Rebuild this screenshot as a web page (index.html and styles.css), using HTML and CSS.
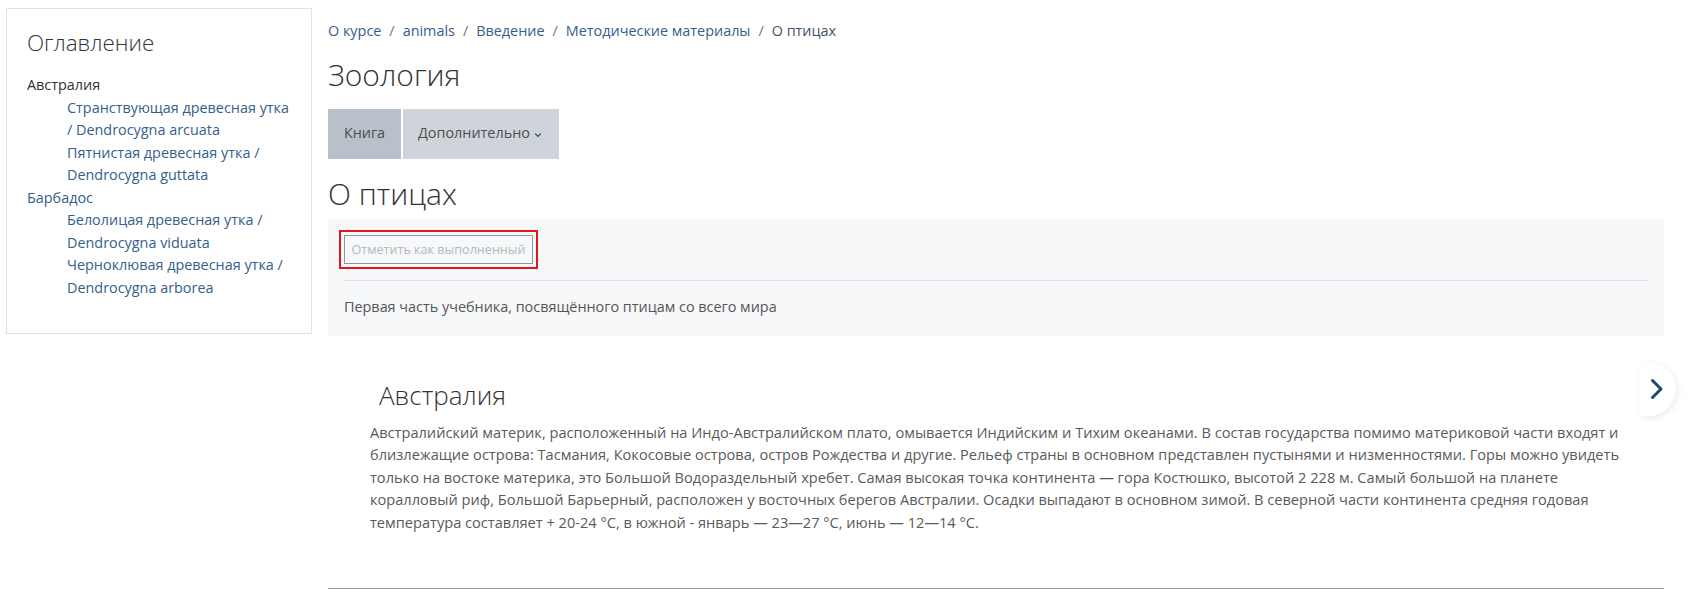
FILE: index.html
```html
<!DOCTYPE html>
<html lang="ru">
<head>
<meta charset="utf-8">
<title>О птицах</title>
<link rel="stylesheet" href="styles.css">
</head>
<body>
<div class="page">
  <aside class="toc">
    <h3 class="toc-title">Оглавление</h3>
    <ul class="toc-list">
      <li class="toc-item current">Австралия
        <ul class="toc-sub">
          <li><a href="#">Странствующая древесная утка / Dendrocygna arcuata</a></li>
          <li><a href="#">Пятнистая древесная утка / Dendrocygna guttata</a></li>
        </ul>
      </li>
      <li class="toc-item"><a href="#">Барбадос</a>
        <ul class="toc-sub">
          <li><a href="#">Белолицая древесная утка / Dendrocygna viduata</a></li>
          <li><a href="#">Черноклювая древесная утка / Dendrocygna arborea</a></li>
        </ul>
      </li>
    </ul>
  </aside>

  <main class="main">
    <nav class="breadcrumb">
      <a href="#">О курсе</a><span class="sep">/</span>
      <a href="#">animals</a><span class="sep">/</span>
      <a href="#">Введение</a><span class="sep">/</span>
      <a href="#">Методические материалы</a><span class="sep">/</span>
      <a href="#" class="last">О птицах</a>
    </nav>
    <h1 class="course-title">Зоология</h1>
    <div class="tabs">
      <span class="tab active">Книга</span>
      <span class="tab">Дополнительно <svg class="caret" width="8" height="6" viewBox="0 0 8 6"><path d="M1.2 1.6 L4 4.4 L6.8 1.6" fill="none" stroke="#444" stroke-width="1.3"/></svg></span>
    </div>
    <h2 class="activity-title">О птицах</h2>
    <section class="activity-panel">
      <div class="completion">
        <button class="complete-btn" type="button">Отметить как выполненный</button>
      </div>
      <hr class="panel-sep">
      <p class="intro">Первая часть учебника, посвящённого птицам со всего мира</p>
    </section>

    <article class="chapter">
      <h3 class="chapter-title">Австралия</h3>
      <p class="chapter-text">Австралийский материк, расположенный на Индо-Австралийском плато, омывается Индийским и Тихим океанами. В состав государства помимо материковой части входят и близлежащие острова: Тасмания, Кокосовые острова, остров Рождества и другие. Рельеф страны в основном представлен пустынями и низменностями. Горы можно увидеть только на востоке материка, это Большой Водораздельный хребет. Самая высокая точка континента — гора Костюшко, высотой 2 228 м. Самый большой на планете коралловый риф, Большой Барьерный, расположен у восточных берегов Австралии. Осадки выпадают в основном зимой. В северной части континента средняя годовая температура составляет + 20-24 °C, в южной - январь — 23—27 °C, июнь — 12—14 °C.</p>
    </article>
    <hr class="bottom-rule">
  </main>
</div>
<a href="#" class="next-nav" aria-label="Далее">
  <svg width="14" height="22" viewBox="0 0 14 22"><path d="M2.5 2.5 L11 11 L2.5 19.5" fill="none" stroke="#1b4a78" stroke-width="3" stroke-linecap="round" stroke-linejoin="round"/></svg>
</a>
</body>
</html>
```

FILE: styles.css
```css
* { box-sizing: border-box; }

html, body {
  margin: 0;
  padding: 0;
  background: #fff;
}

body {
  font-family: "Open Sans", "Liberation Sans", sans-serif;
  font-size: 14.4px;
  line-height: 22.5px;
  color: #555;
  overflow: hidden;
  height: 601px;
}

a { text-decoration: none; color: #34608c; }

.page {
  display: flex;
  align-items: flex-start;
  gap: 16px;
  padding: 8px 25px 0 6px;
}

/* Sidebar */
.toc {
  width: 306px;
  height: 326px;
  flex: none;
  border: 1px solid #e2e2e2;
  padding: 19px 20px 0 20px;
}

.toc-title {
  margin: 0 0 16px 0;
  font-size: 22.4px;
  line-height: 30px;
  font-weight: 300;
  color: #333;
}

.toc-list, .toc-sub {
  list-style: none;
  margin: 0;
  padding: 0;
}

.toc-item.current { color: #333; }

.toc-sub { padding-left: 40px; }

/* Main */
.main {
  flex: 1;
  min-width: 0;
}

.breadcrumb {
  margin-top: 12px;
  color: #6c757d;
  display: flex;
  align-items: center;
}

.breadcrumb .sep {
  padding: 0 8px;
  color: #6c757d;
}

.breadcrumb .last { color: #40536a; }

.course-title {
  margin: 14px 0 0 0;
  font-size: 30px;
  line-height: 36px;
  font-weight: 300;
  color: #333;
}

.tabs {
  display: flex;
  margin-top: 16px;
  height: 50px;
}

.tab {
  display: flex;
  align-items: center;
  gap: 4px;
  padding: 0 14px 0 15px;
  background: #ced4da;
  color: #4f4f4f;
}

.tab.active {
  background: #b8c0c9;
  width: 73px;
  justify-content: center;
  padding: 0;
  margin-right: 2px;
}

.tab:not(.active) { width: 156px; }

.caret { margin-top: 2px; }

.activity-title {
  margin: 17px 0 0 0;
  font-size: 30px;
  line-height: 36px;
  font-weight: 300;
  color: #333;
}

.activity-panel {
  margin-top: 7px;
  background: #f7f8f9;
  padding: 16px 16px 16px 16px;
  height: 117px;
}

.completion { display: flex; }

.complete-btn {
  font-family: "Open Sans", "Liberation Sans", sans-serif;
  font-size: 12.6px;
  line-height: 19px;
  height: 29px;
  width: 189px;
  padding: 0;
  background: transparent;
  border: 1px solid #8f969d;
  color: #b4b9be;
  outline: 2px solid #e8141c;
  outline-offset: 3px;
  border-radius: 0;
}

.panel-sep {
  margin: 16px 0 0 0;
  border: 0;
  border-top: 1px solid #dee2e6;
}

.intro {
  margin: 15px 0 0 0;
}

.chapter {
  margin-top: 44px;
  padding: 0 24px 0 42px;
}

.chapter-title {
  margin: 0 0 0 9px;
  font-size: 26px;
  line-height: 30px;
  font-weight: 300;
  color: #333;
}

.chapter-text {
  margin: 11px 0 0 0;
  font-size: 14.6px;
  color: #5a5a5a;
}

.bottom-rule {
  margin: 55px 0 0 0;
  border: 0;
  border-top: 1px solid #9a9a9a;
}

.next-nav {
  position: absolute;
  left: 1639px;
  top: 362px;
  width: 37px;
  height: 54px;
  background: #fff;
  border-radius: 0 27px 27px 0;
  box-shadow: 2px 2px 6px rgba(0, 0, 0, 0.08);
  display: flex;
  align-items: center;
  justify-content: center;
  padding-right: 2px;
}
```
